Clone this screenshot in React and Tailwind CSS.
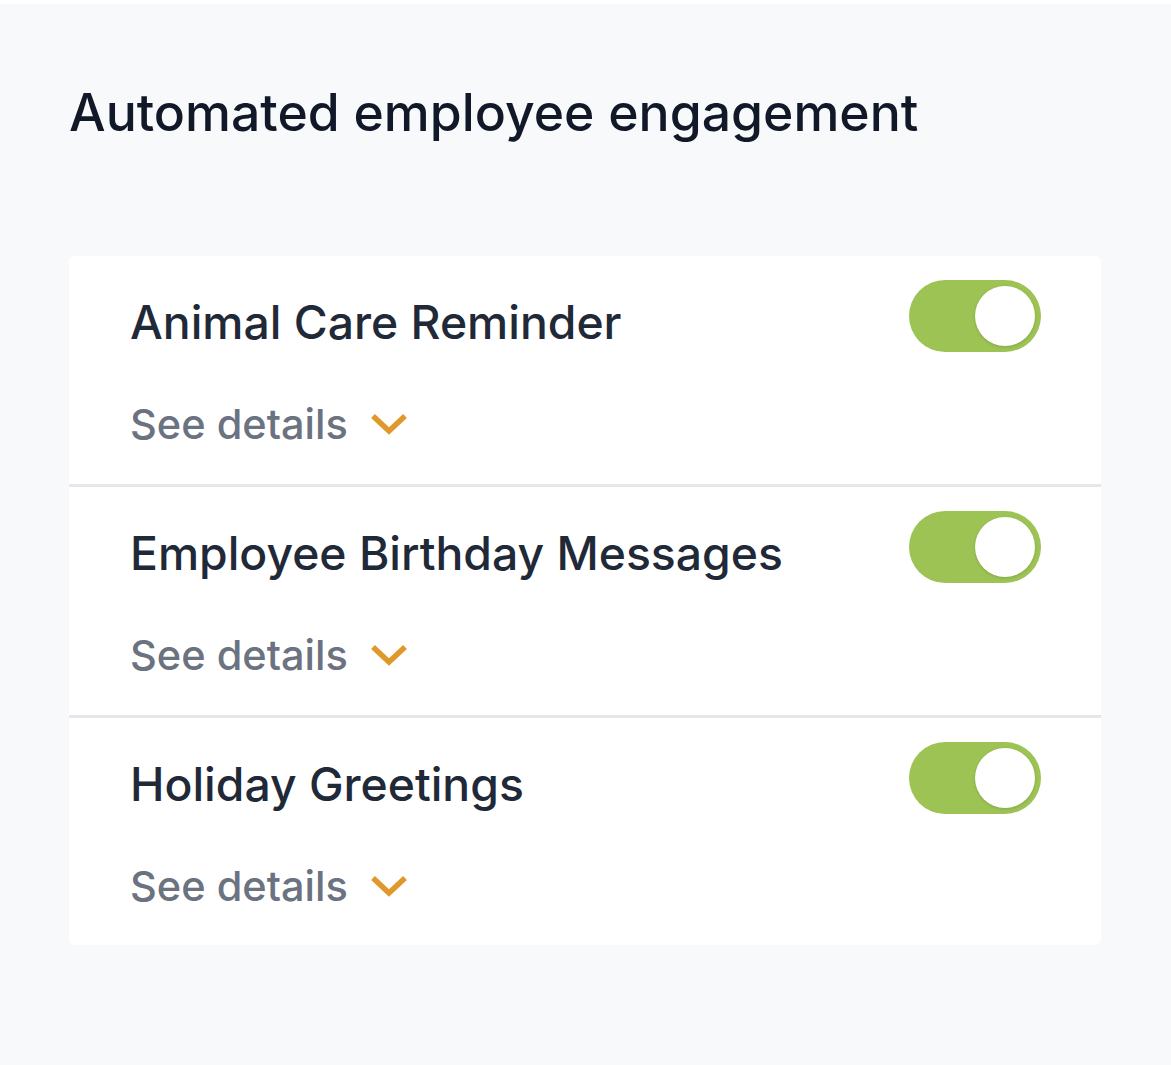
import React from "react";

const items = ["Animal Care Reminder", "Employee Birthday Messages", "Holiday Greetings"];

function Toggle() {
  return (
    <div className="w-[132px] h-[72px] rounded-full bg-[#9cc354] flex items-center justify-end pr-[6px] shrink-0">
      <div className="w-[60px] h-[60px] rounded-full bg-white shadow-[0_1px_3px_rgba(0,0,0,0.15)]" />
    </div>
  );
}

function Chevron() {
  return (
    <svg width="36" height="24" viewBox="0 0 36 24" fill="none" className="shrink-0">
      <path d="M2 4 L18 19 L34 4" stroke="#e0982a" strokeWidth="5.5" strokeLinecap="butt" strokeLinejoin="miter" />
    </svg>
  );
}

function Row({ title, last }) {
  return (
    <div className={`flex items-start justify-between pl-[61px] pr-[60px] pt-[24px] ${last ? "h-[227px]" : "h-[231px] border-b-[3px] border-[#e5e7eb]"}`}>
      <div className="flex flex-col pt-[14px]">
        <div className="text-[46.3px] leading-[56px] text-[#1f2937] font-medium">{title}</div>
        <div className="flex items-center gap-[23px] mt-[50px]">
          <span className="text-[41.5px] leading-[48px] text-[#6b7280] font-medium">See details</span>
          <Chevron />
        </div>
      </div>
      <Toggle />
    </div>
  );
}

export default function App() {
  return (
    <div className="w-[1171px] h-[1065px] bg-white" style={{ fontFamily: "Inter, 'Noto Sans', sans-serif" }}>
      <div className="h-[4px] bg-white" />
      <div className="h-[1061px] bg-[#f8f9fb] pl-[69px] pr-[70px] pt-[76px]">
        <h1 className="text-[51.7px] leading-[64px] text-[#111827] font-medium">Automated employee engagement</h1>
        <div className="mt-[112px] bg-white rounded-[6px]">
          {items.map((t, i) => (
            <Row key={t} title={t} last={i === items.length - 1} />
          ))}
        </div>
      </div>
    </div>
  );
}
